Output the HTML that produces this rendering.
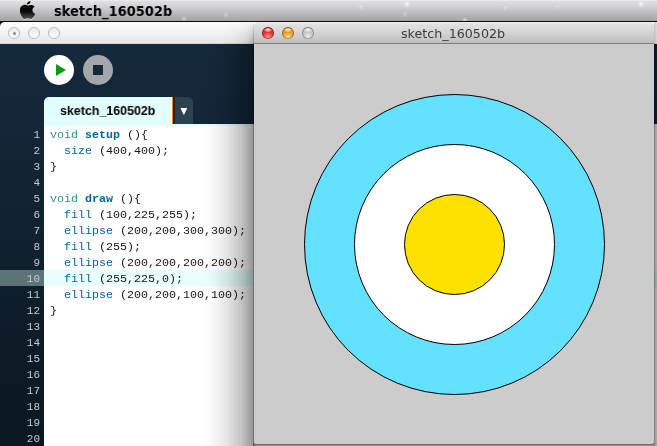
<!DOCTYPE html>
<html lang="en">
<head>
<meta charset="utf-8">
<title>sketch_160502b</title>
<style>
*{margin:0;padding:0;box-sizing:border-box}
html,body{width:657px;height:446px;overflow:hidden;background:#fff}
body{position:relative;font-family:"Liberation Sans",sans-serif}
.abs{position:absolute}
#menubar{left:0;top:0;width:657px;height:21px;background:linear-gradient(to bottom,#f2f2f2 0,#e0e0e2 1px,#d4d4d6 6px,#bcbcbe 13px,#a6a6a8 20px,#a0a0a2 21px)}
#menuline{left:0;top:21px;width:657px;height:1px;background:#0a0a0a}
#menutitle{left:54px;top:0.5px;height:21px;line-height:21px;font-family:"DejaVu Sans","Liberation Sans",sans-serif;font-weight:bold;font-size:14px;color:#000;white-space:nowrap;transform-origin:0 50%;transform:scaleX(.929)}
/* editor window */
#edtitle{left:0;top:22px;width:657px;height:22px;background:linear-gradient(to bottom,#ffffff 0,#fafafa 2px,#f2f2f2 11px,#e7e7e7 20.500px,#d2d2d2 21.500px,#c8c8c8 22px)}
.tl{position:absolute;width:12px;height:12px;border-radius:50%;top:27px}
.tl.in{border:1px solid #bdbdbd;background:linear-gradient(to bottom,#ececec,#fbfbfb)}
#toolbar{left:0;top:44px;width:657px;height:80px;background:linear-gradient(to bottom,#15293c,#132638)}
#gutter{left:0;top:124px;width:44px;height:322px;background:linear-gradient(to bottom,#132637,#0b1721)}
#code{left:44px;top:126px;width:613px;height:320px;background:#fff}
#hl-g{left:0;top:270px;width:44px;height:16px;background:#5c7478}
#hl-c{left:44px;top:270px;width:613px;height:16px;background:#e8fffd}
.ln,.cl,#menutitle,#tabtxt,#sktxt{will-change:transform}
.ln{position:absolute;margin-top:1px;left:0;width:40px;text-align:right;height:16px;line-height:16px;font-family:"Liberation Mono",monospace;font-size:11px;color:#c4cace;white-space:pre}
.cl{position:absolute;margin-top:1px;left:50px;height:16px;line-height:16px;font-family:"Liberation Mono",monospace;font-size:11.67px;color:#161616;white-space:pre}
.k1{color:#33997e}
.k2{color:#006699;font-weight:bold}
.fn{color:#006699}
#play{left:44px;top:55px;width:30px;height:30px;border-radius:50%;background:#fff}
#stop{left:83px;top:55px;width:30px;height:30px;border-radius:50%;background:#a3a7ab}
#tab{left:44px;top:97px;width:128px;height:29px;background:#e0fffd;border-radius:5px 0 0 0}
#strip{left:44px;top:124px;width:613px;height:2px;background:#e0fffd}
#tabtxt{left:60px;top:97.6px;height:27px;line-height:27px;font-weight:bold;font-size:12.7px;color:#000;white-space:nowrap;transform-origin:0 50%;transform:scaleX(.98)}
#tabmod{left:172px;top:97px;width:1px;height:27px;background:#ef8115}
#tabarrow{left:175px;top:97px;width:18px;height:27px;background:#2d4251;border-radius:0 5px 0 0}
#shadow{left:205px;top:44px;width:49px;height:402px;background:linear-gradient(to right,rgba(0,0,0,0) 0,rgba(0,0,0,.02) 15%,rgba(0,0,0,.10) 45%,rgba(0,0,0,.24) 75%,rgba(0,0,0,.42) 100%)}
#shadow2{left:222px;top:22px;width:32px;height:22px;background:linear-gradient(to right,rgba(0,0,0,0) 0,rgba(0,0,0,.03) 40%,rgba(0,0,0,.10) 75%,rgba(0,0,0,.26) 100%);-webkit-mask-image:linear-gradient(to bottom,rgba(0,0,0,.15),rgba(0,0,0,1));mask-image:linear-gradient(to bottom,rgba(0,0,0,.15),rgba(0,0,0,1))}
/* sketch window */
#sk{left:254px;top:22px;width:400px;height:422px;background:#ccc;border-radius:5px 5px 3px 3px;overflow:hidden}
#sktitle{left:0;top:0;width:400px;height:22px;background:linear-gradient(to bottom,#f2f2f2 0,#f0f0f0 1px,#e3e3e3 1.500px,#d3d3d3 11px,#bfbfbf 20.500px,#7e7e7e 21px,#7e7e7e 22px)}
#sktxt{left:401px;top:22.8px;height:22px;line-height:22px;font-family:"DejaVu Sans","Liberation Sans",sans-serif;font-size:12.7px;color:#3c3c3c;white-space:nowrap;transform-origin:0 50%}
</style>
</head>
<body>
<div id="menubar" class="abs"></div>
<div class="abs" style="left:0;top:0;width:657px;height:21px;overflow:hidden;background:radial-gradient(circle 4px at 407px 4px,rgba(245,250,255,.95),rgba(235,242,255,.5) 45%,rgba(235,242,255,0) 100%),radial-gradient(circle 4px at 641px 4px,rgba(245,250,255,.95),rgba(235,242,255,.5) 45%,rgba(235,242,255,0) 100%),radial-gradient(circle 3px at 465px 20px,rgba(225,235,255,.8),rgba(225,235,255,0) 100%),radial-gradient(circle 3px at 361px 7px,rgba(235,240,250,.5),rgba(235,240,250,0) 100%),radial-gradient(circle 3px at 505px 8px,rgba(235,240,250,.45),rgba(235,240,250,0) 100%),radial-gradient(circle 3px at 405px 14px,rgba(235,240,250,.4),rgba(235,240,250,0) 100%),radial-gradient(circle 3px at 557px 7px,rgba(235,240,250,.4),rgba(235,240,250,0) 100%),radial-gradient(circle 3px at 226px 15px,rgba(215,225,250,.55),rgba(215,225,250,0) 100%),radial-gradient(circle 3px at 92px 2px,rgba(245,245,250,.6),rgba(245,245,250,0) 100%),radial-gradient(circle 3px at 184px 19px,rgba(240,225,220,.6),rgba(240,225,220,0) 100%)"></div>
<div id="menuline" class="abs"></div>
<svg class="abs" style="left:14px;top:0" width="30" height="22" viewBox="0 0 30 22"><defs><linearGradient id="ag" x1="0" y1="0" x2="0" y2="1"><stop offset="0" stop-color="#000"/><stop offset=".5" stop-color="#0c0c0c"/><stop offset="1" stop-color="#555"/></linearGradient></defs><path d="M13.800 6.700C12.500 6 11 5.700 9.600 5.900C7.200 6.300 5.900 8.600 5.900 11.400C5.900 14.400 7.400 17.600 9 19.200C9.700 19.900 10.600 20.200 11.300 20C12.200 19.700 12.900 19.300 13.800 19.300C14.700 19.300 15.400 19.700 16.300 20C17.200 20.200 18 19.700 18.800 18.800C19.900 17.600 20.700 16.300 21.200 15C19.600 14.400 18.500 13 18.500 11.300C18.500 9.800 19.300 8.500 20.600 7.700C19.800 6.500 18.600 5.900 17.400 5.900C16 5.900 14.900 6.400 13.800 6.700Z" fill="rgba(255,255,255,.55)"/><path d="M13.800 5.700C12.500 5 11 4.700 9.600 4.900C7.200 5.300 5.900 7.600 5.900 10.400C5.900 13.400 7.400 16.600 9 18.200C9.700 18.900 10.600 19.200 11.300 19C12.200 18.700 12.900 18.300 13.800 18.300C14.700 18.300 15.400 18.700 16.300 19C17.200 19.200 18 18.700 18.800 17.800C19.900 16.600 20.700 15.300 21.200 14C19.600 13.400 18.500 12 18.500 10.300C18.500 8.800 19.300 7.500 20.600 6.700C19.800 5.500 18.600 4.900 17.400 4.900C16 4.900 14.900 5.400 13.800 5.700Z" fill="url(#ag)"/><path d="M12.900 4.500C12.800 2.900 14.400 1.200 16.500 1C16.700 2.700 15 4.500 12.900 4.500Z" fill="#000"/></svg>
<div id="menutitle" class="abs">sketch_160502b</div>

<div id="edtitle" class="abs"></div>
<div class="tl in" style="left:8px"></div>
<div class="tl in" style="left:28px"></div>
<div class="tl in" style="left:48px"></div>
<div class="abs" style="left:12.500px;top:31.500px;width:3px;height:3px;border-radius:50%;background:#8a8a8a"></div>
<div class="abs" style="left:0;top:22px;width:4px;height:4px;background:radial-gradient(circle at 4px 4px,rgba(0,0,0,0) 3.300px,#151515 4.300px)"></div>

<div id="toolbar" class="abs"></div>
<div id="play" class="abs"></div>
<svg class="abs" style="left:44px;top:55px" width="30" height="30" viewBox="0 0 30 30"><path d="M12 9 L22 15 L12 21 Z" fill="#0a9a10"/></svg>
<div id="stop" class="abs"></div>
<div class="abs" style="left:93px;top:65px;width:10px;height:10px;background:#16283a"></div>
<div id="strip" class="abs"></div>
<div id="tab" class="abs"></div>
<div id="tabtxt" class="abs">sketch_160502b</div>
<div id="tabmod" class="abs"></div>
<div id="tabarrow" class="abs"></div>
<svg class="abs" style="left:179px;top:106px" width="10" height="10" viewBox="0 0 10 10"><path d="M1.500 2 L8.200 2 L5.300 8.600 L4.400 8.600 Z" fill="#fff"/></svg>

<div id="gutter" class="abs"></div>
<div id="code" class="abs"></div>
<div id="hl-g" class="abs"></div>
<div id="hl-c" class="abs"></div>

<div class="ln" style="top:126px">1</div>
<div class="ln" style="top:142px">2</div>
<div class="ln" style="top:158px">3</div>
<div class="ln" style="top:174px">4</div>
<div class="ln" style="top:190px">5</div>
<div class="ln" style="top:206px">6</div>
<div class="ln" style="top:222px">7</div>
<div class="ln" style="top:238px">8</div>
<div class="ln" style="top:254px">9</div>
<div class="ln" style="top:270px">10</div>
<div class="ln" style="top:286px">11</div>
<div class="ln" style="top:302px">12</div>
<div class="ln" style="top:318px">13</div>
<div class="ln" style="top:334px">14</div>
<div class="ln" style="top:350px">15</div>
<div class="ln" style="top:366px">16</div>
<div class="ln" style="top:382px">17</div>
<div class="ln" style="top:398px">18</div>
<div class="ln" style="top:414px">19</div>
<div class="ln" style="top:430px">20</div>

<div class="cl" style="top:126px"><span class="k1">void</span> <span class="k2">setup</span> (){</div>
<div class="cl" style="top:142px">  <span class="fn">size</span> (400,400);</div>
<div class="cl" style="top:158px">}</div>
<div class="cl" style="top:190px"><span class="k1">void</span> <span class="k2">draw</span> (){</div>
<div class="cl" style="top:206px">  <span class="fn">fill</span> (100,225,255);</div>
<div class="cl" style="top:222px">  <span class="fn">ellipse</span> (200,200,300,300);</div>
<div class="cl" style="top:238px">  <span class="fn">fill</span> (255);</div>
<div class="cl" style="top:254px">  <span class="fn">ellipse</span> (200,200,200,200);</div>
<div class="cl" style="top:270px">  <span class="fn">fill</span> (255,225,0);</div>
<div class="cl" style="top:286px">  <span class="fn">ellipse</span> (200,200,100,100);</div>
<div class="cl" style="top:302px">}</div>

<div id="shadow" class="abs"></div>
<div id="shadow2" class="abs"></div>
<div class="abs" style="left:253px;top:444px;width:401px;height:2px;background:linear-gradient(to bottom,rgba(0,0,0,.56) 0,rgba(0,0,0,.56) 1px,rgba(0,0,0,.44) 1px,rgba(0,0,0,.44) 2px)"></div>
<div class="abs" style="left:253px;top:25px;width:1px;height:419px;background:linear-gradient(to bottom,rgba(0,0,0,.06),rgba(0,0,0,.25) 30px)"></div>
<div class="abs" style="left:254px;top:438px;width:400px;height:6px;background:#787878"></div>
<div class="abs" style="left:654px;top:22px;width:3px;height:22px;background:linear-gradient(to right,rgba(0,0,0,.2),rgba(0,0,0,.1))"></div>
<div class="abs" style="left:654px;top:44px;width:3px;height:402px;background:linear-gradient(to right,rgba(0,0,0,.5) 0,rgba(0,0,0,.5) 1px,rgba(0,0,0,.38) 1px,rgba(0,0,0,.32) 3px)"></div>

<div id="sk" class="abs">
  <div id="sktitle" class="abs"></div>
  <svg class="abs" style="left:0;top:22px" width="400" height="400" viewBox="0 0 400 400">
    <rect width="400" height="400" fill="#cccccc"/>
    <circle cx="200.5" cy="200.5" r="150" fill="#64e1ff" stroke="#000" stroke-width="1"/>
    <circle cx="200.5" cy="200.5" r="100" fill="#ffffff" stroke="#000" stroke-width="1"/>
    <circle cx="200.5" cy="200.5" r="50" fill="#ffe100" stroke="#000" stroke-width="1"/>
  </svg>
</div>
<div class="tl" style="left:262px;border:1px solid;border-color:#74141a #922428 #b04848;background:radial-gradient(ellipse 4.500px 2.600px at 50% 17%,rgba(255,255,255,.95),rgba(255,255,255,0) 100%),radial-gradient(ellipse 6px 7px at 50% 108%,rgba(255,170,165,1),rgba(255,170,165,.5) 50%,rgba(255,170,165,0) 100%),#e32f38"></div>
<div class="tl" style="left:282px;border:1px solid;border-color:#86581a #a4741e #c09438;background:radial-gradient(ellipse 4.500px 2.600px at 50% 17%,rgba(255,255,255,.95),rgba(255,255,255,0) 100%),radial-gradient(ellipse 6px 7px at 50% 108%,rgba(255,246,170,1),rgba(255,246,170,.5) 50%,rgba(255,246,170,0) 100%),#e8962a"></div>
<div class="tl" style="left:302px;border:1px solid;border-color:#7a7a7a #8e8e8e #a2a2a2;background:radial-gradient(ellipse 4.500px 2.600px at 50% 17%,rgba(255,255,255,.95),rgba(255,255,255,0) 100%),radial-gradient(ellipse 6px 7px at 50% 108%,rgba(252,252,252,1),rgba(252,252,252,.5) 50%,rgba(252,252,252,0) 100%),#c4c4c4"></div>
<div id="sktxt" class="abs">sketch_160502b</div>
</body>
</html>
